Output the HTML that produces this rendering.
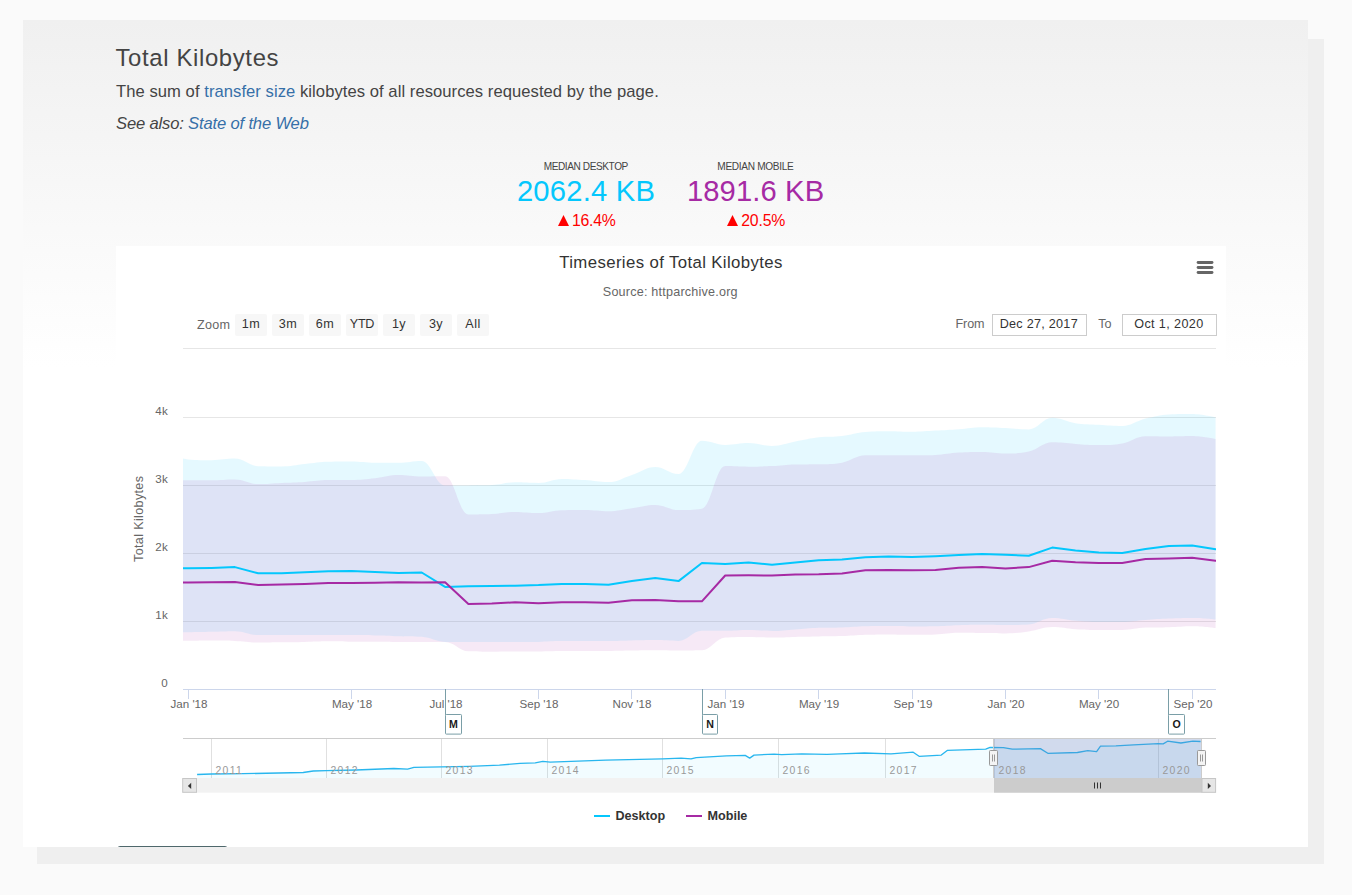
<!DOCTYPE html>
<html><head><meta charset="utf-8"><title>Total Kilobytes</title>
<style>
html,body{margin:0;padding:0}
body{width:1352px;height:895px;overflow:hidden;background:#fafafa;position:relative;font-family:"Liberation Sans",sans-serif;color:#444}
.shadow{position:absolute;left:37px;top:39px;width:1287px;height:825px;background:#efefef}
.card{position:absolute;left:23px;top:20px;width:1285px;height:827px;background:linear-gradient(#f0f0f0,#fff 42%);overflow:hidden}
.t{position:absolute;white-space:nowrap;line-height:1;margin:0;font-weight:normal}
a{color:#366fa8;text-decoration:none}
.c{text-align:center;transform:translateX(-50%)}
.btn{position:absolute;left:94px;top:826px;width:111px;height:30px;border:1px solid #4f686c;border-radius:3px;box-sizing:border-box}
</style></head><body>
<div class="shadow"></div>
<div class="card"><div class="btn"></div></div>
<h2 class="t" style="left:115.4px;top:46.2px;font-size:23.9px;letter-spacing:.65px">Total Kilobytes</h2>
<p class="t" style="left:116px;top:84px;font-size:16.6px;letter-spacing:.056px">The sum of <a>transfer size</a> kilobytes of all resources requested by the page.</p>
<p class="t" style="left:116px;top:116.2px;font-size:16.6px;font-style:italic;letter-spacing:-.17px">See also: <a>State of the Web</a></p>
<div class="t c" style="left:585.8px;top:162.3px;font-size:10.1px;letter-spacing:-.42px">MEDIAN DESKTOP</div>
<div class="t c" style="left:586px;top:176.6px;font-size:29.2px;letter-spacing:.2px;color:#04c7fd">2062.4 KB</div>
<div class="t c" style="left:586.6px;top:213.2px;font-size:15.8px;letter-spacing:-.2px;color:#f00"><svg width="11.2" height="11.1" viewBox="0 0 11.2 11.1" style="display:inline-block;vertical-align:baseline;margin-right:3.2px"><path d="M0 11.1L5.6 0L11.2 11.1Z" fill="#f00"/></svg>16.4%</div>
<div class="t c" style="left:755.4px;top:162.3px;font-size:10.1px;letter-spacing:-.32px">MEDIAN MOBILE</div>
<div class="t c" style="left:755.6px;top:176.6px;font-size:29.2px;letter-spacing:.11px;color:#a62aa4">1891.6 KB</div>
<div class="t c" style="left:756px;top:213.2px;font-size:15.8px;letter-spacing:-.2px;color:#f00"><svg width="11.2" height="11.1" viewBox="0 0 11.2 11.1" style="display:inline-block;vertical-align:baseline;margin-right:3.2px"><path d="M0 11.1L5.6 0L11.2 11.1Z" fill="#f00"/></svg>20.5%</div>
<svg width="1110" height="600" viewBox="0 0 1110 600" style="position:absolute;left:116px;top:246px;font-family:'Liberation Sans',sans-serif;overflow:hidden">
<defs><clipPath id="cp"><rect x="67" y="102" width="1033" height="342"/></clipPath><clipPath id="cn"><rect x="67" y="493" width="1033" height="39"/></clipPath></defs>
<rect width="1110" height="600" fill="#fff"/>
<text x="555" y="21.69999999999999" text-anchor="middle" font-size="16.8" letter-spacing="0.375" fill="#333">Timeseries of Total Kilobytes</text>
<text x="554.3" y="49.69999999999999" text-anchor="middle" font-size="12.6" letter-spacing="0.21" fill="#666">Source: httparchive.org</text>
<path d="M1082.1 16.5H1096" stroke="#666" stroke-width="2.9" stroke-linecap="round"/>
<path d="M1082.1 21.5H1096" stroke="#666" stroke-width="2.9" stroke-linecap="round"/>
<path d="M1082.1 26.5H1096" stroke="#666" stroke-width="2.9" stroke-linecap="round"/>
<text x="81" y="82.60000000000002" font-size="12.6" letter-spacing="0.26" fill="#666">Zoom</text>
<rect x="119" y="68" width="32" height="22" rx="2" fill="#f7f7f7"/>
<text x="135" y="82.30000000000001" text-anchor="middle" font-size="12.6" letter-spacing="0.45" fill="#333">1m</text>
<rect x="156" y="68" width="32" height="22" rx="2" fill="#f7f7f7"/>
<text x="172" y="82.30000000000001" text-anchor="middle" font-size="12.6" letter-spacing="0.45" fill="#333">3m</text>
<rect x="193" y="68" width="32" height="22" rx="2" fill="#f7f7f7"/>
<text x="209" y="82.30000000000001" text-anchor="middle" font-size="12.6" letter-spacing="0.45" fill="#333">6m</text>
<rect x="230" y="68" width="32" height="22" rx="2" fill="#f7f7f7"/>
<text x="246" y="82.30000000000001" text-anchor="middle" font-size="12.6" letter-spacing="-0.3" fill="#333">YTD</text>
<rect x="267" y="68" width="32" height="22" rx="2" fill="#f7f7f7"/>
<text x="283" y="82.30000000000001" text-anchor="middle" font-size="12.6" letter-spacing="0.45" fill="#333">1y</text>
<rect x="304" y="68" width="32" height="22" rx="2" fill="#f7f7f7"/>
<text x="320" y="82.30000000000001" text-anchor="middle" font-size="12.6" letter-spacing="0.45" fill="#333">3y</text>
<rect x="341" y="68" width="32" height="22" rx="2" fill="#f7f7f7"/>
<text x="357" y="82.30000000000001" text-anchor="middle" font-size="12.6" letter-spacing="0.45" fill="#333">All</text>
<text x="839.5" y="82.30000000000001" font-size="12.6" letter-spacing="-0.1" fill="#666">From</text>
<rect x="876.5" y="68.5" width="94" height="21" fill="#fff" stroke="#ccc"/>
<text x="922.8" y="82.30000000000001" text-anchor="middle" font-size="12.6" letter-spacing="0.28" fill="#333">Dec 27, 2017</text>
<text x="982.2" y="82.30000000000001" font-size="12.6" letter-spacing="0" fill="#666">To</text>
<rect x="1006.5" y="68.5" width="94" height="21" fill="#fff" stroke="#ccc"/>
<text x="1052.9" y="82.30000000000001" text-anchor="middle" font-size="12.6" letter-spacing="0.38" fill="#333">Oct 1, 2020</text>
<path d="M67 102.5H1100" stroke="#e6e6e6"/>
<text x="52" y="440.5" text-anchor="end" font-size="11.6" letter-spacing="0.3" fill="#666">0</text>
<path d="M67 375.5H1100" stroke="#e6e6e6"/>
<text x="52" y="372.5" text-anchor="end" font-size="11.6" letter-spacing="0.3" fill="#666">1k</text>
<path d="M67 307.5H1100" stroke="#e6e6e6"/>
<text x="52" y="304.5" text-anchor="end" font-size="11.6" letter-spacing="0.3" fill="#666">2k</text>
<path d="M67 239.5H1100" stroke="#e6e6e6"/>
<text x="52" y="236.5" text-anchor="end" font-size="11.6" letter-spacing="0.3" fill="#666">3k</text>
<path d="M67 171.5H1100" stroke="#e6e6e6"/>
<text x="52" y="168.5" text-anchor="end" font-size="11.6" letter-spacing="0.3" fill="#666">4k</text>
<text transform="translate(26.80000000000001 272.79999999999995) rotate(-90)" text-anchor="middle" font-size="12.6" letter-spacing="0.34" fill="#666">Total Kilobytes</text>
<g clip-path="url(#cp)">
<path d="M48.8 206.5C48.8 206.5 62.9 212.6 72.2 213.4C81.5 214.2 86.2 214.2 95.5 214.2C104.9 214.2 109.6 212.6 118.9 212.6C128.2 212.6 132.9 220 142.2 220.2C151.6 220.4 156.3 220.4 165.6 220.4C174.9 220.4 179.6 218.9 188.9 218C198.3 217.1 203 216 212.3 215.8C221.6 215.6 226.3 215.6 235.6 215.6C245 215.6 249.7 216.8 259 216.8C268.3 216.8 273 216.8 282.4 216.8C291.7 216.8 296.4 215 305.7 215C315 215 319.7 239.6 329.1 239.6C338.4 239.6 343.1 239.6 352.4 239.5C361.7 239.4 366.4 239.5 375.8 239.1C385.1 238.7 389.8 236.3 399.1 236.3C408.4 236.3 413.1 236.9 422.5 236.9C431.8 236.9 436.5 232.9 445.8 232.9C455.1 232.9 459.8 233.5 469.2 234.1C478.5 234.7 483.2 236.1 492.5 236.1C501.8 236.1 506.5 232 515.9 229C525.2 226 529.9 221 539.2 221C548.5 221 553.2 228 562.5 228C571.9 228 576.6 194.7 585.9 194.7C595.2 194.7 599.9 198.9 609.2 198.9C618.6 198.9 623.3 197.1 632.6 197.1C641.9 197.1 646.6 199.9 656 199.9C665.3 199.9 670 197.2 679.3 195.5C688.6 193.8 693.3 192.4 702.7 191.3C712 190.2 716.7 191 726 189.9C735.3 188.8 740 186.8 749.4 186C758.7 185.2 763.4 185.2 772.7 185.2C782 185.2 786.7 185.8 796 185.8C805.4 185.8 810.1 185.1 819.4 184.6C828.7 184.1 833.4 183.9 842.8 183.2C852.1 182.5 856.8 181.2 866.1 181.2C875.4 181.2 880.1 181.6 889.5 182C898.8 182.4 903.5 183.4 912.8 183.4C922.1 183.4 926.8 171.8 936.2 171.8C945.5 171.8 950.2 175.8 959.5 177.2C968.8 178.6 973.5 178.2 982.9 178.8C992.2 179.4 996.9 180 1006.2 180C1015.5 180 1020.2 174.9 1029.5 172.6C1038.9 170.3 1043.6 168.8 1052.9 168.4C1062.2 168 1066.9 168 1076.2 168C1085.6 168 1099.6 171.4 1099.6 171.4L1099.6 373.6C1099.6 373.6 1085.6 372 1076.2 372C1066.9 372 1062.2 372.2 1052.9 372.6C1043.6 373 1038.9 373.3 1029.5 374C1020.2 374.7 1015.5 376 1006.2 376C996.9 376 992.2 376 982.9 376C973.5 376 968.8 375.6 959.5 374.8C950.2 374 945.5 372 936.2 372C926.8 372 922.1 377.8 912.8 378.4C903.5 379 898.8 379 889.5 379C880.1 379 875.4 378.8 866.1 378.8C856.8 378.8 852.1 378.9 842.8 379.2C833.4 379.5 828.7 380 819.4 380.2C810.1 380.4 805.4 380.4 796 380.4C786.7 380.4 782 380 772.7 380C763.4 380 758.7 380 749.4 380.2C740 380.4 735.3 381.1 726 381.4C716.7 381.7 712 381.4 702.7 381.8C693.3 382.2 688.6 382.8 679.3 383.4C670 384 665.3 385 656 385C646.6 385 641.9 384 632.6 384C623.3 384 618.6 384.8 609.2 384.8C599.9 384.8 595.2 384.8 585.9 384.8C576.6 384.8 571.9 394.9 562.5 394.9C553.2 394.9 548.5 394.1 539.2 394.1C529.9 394.1 525.2 394.3 515.9 394.5C506.5 394.7 501.8 395.1 492.5 395.1C483.2 395.1 478.5 395.1 469.2 395.1C459.8 395.1 455.1 395.1 445.8 395.1C436.5 395.1 431.8 395.7 422.5 395.9C413.1 396.1 408.4 396.1 399.1 396.1C389.8 396.1 385.1 396.1 375.8 396.1C366.4 396.1 361.7 396.1 352.4 396.1C343.1 396.1 338.4 396.1 329.1 395.9C319.7 395.7 315 391.4 305.7 390.8C296.4 390.2 291.7 390.5 282.4 390.2C273 389.9 268.3 389.6 259 389.4C249.7 389.2 245 389 235.6 389C226.3 389 221.6 389 212.3 389C203 389 198.3 389 188.9 389C179.6 389 174.9 389 165.6 389C156.3 389 151.6 389 142.2 389C132.9 389 128.2 385.2 118.9 385.2C109.6 385.2 104.9 385.6 95.5 385.8C86.2 386 81.5 386.2 72.2 386.2C62.9 386.2 48.8 386.2 48.8 386.2Z" fill="#04c7fd" fill-opacity="0.1"/>
<path d="M48.8 233C48.8 233 62.9 234.3 72.2 234.3C81.5 234.3 86.2 234.3 95.5 234.3C104.9 234.3 109.6 233.5 118.9 233.5C128.2 233.5 132.9 238.1 142.2 238.1C151.6 238.1 156.3 237.3 165.6 236.9C174.9 236.5 179.6 236.5 188.9 235.9C198.3 235.3 203 234.2 212.3 234.1C221.6 234 226.3 234.1 235.6 234C245 233.9 249.7 233.3 259 232.3C268.3 231.3 273 229 282.4 229C291.7 229 296.4 230.5 305.7 230.5C315 230.5 319.7 230.3 329.1 230.3C338.4 230.3 343.1 268.5 352.4 268.5C361.7 268.5 366.4 268.5 375.8 268.1C385.1 267.7 389.8 265.9 399.1 265.9C408.4 265.9 413.1 267.1 422.5 267.1C431.8 267.1 436.5 264.5 445.8 264.3C455.1 264.1 459.8 264.1 469.2 264.1C478.5 264.1 483.2 265.3 492.5 265.3C501.8 265.3 506.5 263.5 515.9 262.3C525.2 261.1 529.9 259.1 539.2 259.1C548.5 259.1 553.2 264.1 562.5 264.1C571.9 264.1 576.6 264.1 585.9 262.8C595.2 261.5 599.9 220.1 609.2 220.1C618.6 220.1 623.3 220.7 632.6 220.7C641.9 220.7 646.6 220.5 656 220.1C665.3 219.7 670 218.7 679.3 218.5C688.6 218.3 693.3 218.5 702.7 218.3C712 218.1 716.7 218.3 726 216.7C735.3 215.1 740 209.3 749.4 209.3C758.7 209.3 763.4 209.3 772.7 209.3C782 209.3 786.7 209.3 796 209.3C805.4 209.3 810.1 209.3 819.4 208.9C828.7 208.5 833.4 207.1 842.8 206.5C852.1 205.9 856.8 205.9 866.1 205.9C875.4 205.9 880.1 207.5 889.5 207.5C898.8 207.5 903.5 207.5 912.8 205.5C922.1 203.5 926.8 196.3 936.2 196.3C945.5 196.3 950.2 197.3 959.5 197.9C968.8 198.5 973.5 199.1 982.9 199.1C992.2 199.1 996.9 199.1 1006.2 197.5C1015.5 195.9 1020.2 190.3 1029.5 190.3C1038.9 190.3 1043.6 190.5 1052.9 190.5C1062.2 190.5 1066.9 190.1 1076.2 190.1C1085.6 190.1 1099.6 193.1 1099.6 193.1L1099.6 382C1099.6 382 1085.6 380.2 1076.2 380.2C1066.9 380.2 1062.2 380.9 1052.9 381.2C1043.6 381.5 1038.9 381.2 1029.5 381.6C1020.2 382 1015.5 384 1006.2 384C996.9 384 992.2 384 982.9 384C973.5 384 968.8 383.8 959.5 383.2C950.2 382.6 945.5 381 936.2 381C926.8 381 922.1 384.1 912.8 385.4C903.5 386.7 898.8 387.4 889.5 387.4C880.1 387.4 875.4 387.1 866.1 387C856.8 386.9 852.1 386.8 842.8 386.8C833.4 386.8 828.7 388 819.4 388.4C810.1 388.8 805.4 388.8 796 388.8C786.7 388.8 782 388.4 772.7 388.4C763.4 388.4 758.7 388.5 749.4 388.8C740 389.1 735.3 389.8 726 390.1C716.7 390.4 712 390.3 702.7 390.5C693.3 390.7 688.6 390.7 679.3 390.9C670 391.1 665.3 391.5 656 391.5C646.6 391.5 641.9 390.9 632.6 390.9C623.3 390.9 618.6 390.9 609.2 391.5C599.9 392.1 595.2 404.1 585.9 404.3C576.6 404.5 571.9 404.5 562.5 404.5C553.2 404.5 548.5 404.3 539.2 404.3C529.9 404.3 525.2 404.4 515.9 404.5C506.5 404.6 501.8 404.9 492.5 404.9C483.2 404.9 478.5 404.9 469.2 404.9C459.8 404.9 455.1 405 445.8 405.1C436.5 405.2 431.8 405.5 422.5 405.5C413.1 405.5 408.4 405.5 399.1 405.5C389.8 405.5 385.1 405.7 375.8 405.7C366.4 405.7 361.7 405.7 352.4 405.3C343.1 404.9 338.4 395.9 329.1 395.9C319.7 395.9 315 396.1 305.7 396.1C296.4 396.1 291.7 396 282.4 395.9C273 395.8 268.3 395.7 259 395.7C249.7 395.7 245 395.7 235.6 395.7C226.3 395.7 221.6 395.3 212.3 395.3C203 395.3 198.3 395.7 188.9 395.9C179.6 396.1 174.9 396.2 165.6 396.3C156.3 396.4 151.6 396.5 142.2 396.5C132.9 396.5 128.2 395.3 118.9 394.9C109.6 394.5 104.9 394.5 95.5 394.5C86.2 394.5 81.5 394.7 72.2 394.7C62.9 394.7 48.8 394.7 48.8 394.7Z" fill="#a62aa4" fill-opacity="0.1"/>
<path d="M48.8 322L72.2 322.3L95.5 321.9L118.9 321.1L142.2 327.3L165.6 327.3L188.9 326.3L212.3 325.3L235.6 325.1L259 325.9L282.4 326.9L305.7 326.5L329.1 340.9L352.4 340.3L375.8 340.1L399.1 339.7L422.5 339.1L445.8 337.9L469.2 338.1L492.5 338.7L515.9 334.9L539.2 331.9L562.5 335.1L585.9 317L609.2 318L632.6 316.4L656 318.8L679.3 316.4L702.7 314.2L726 313.6L749.4 311.2L772.7 310.4L796 311L819.4 310.2L842.8 309L866.1 308L889.5 308.8L912.8 309.8L936.2 301.6L959.5 304.4L982.9 306.4L1006.2 307L1029.5 303L1052.9 300L1076.2 299.6L1099.6 303.2" fill="none" stroke="#04c7fd" stroke-width="2" stroke-linejoin="round" stroke-linecap="round"/>
<path d="M48.8 336.4L72.2 336.5L95.5 336.2L118.9 335.9L142.2 339.1L165.6 338.5L188.9 337.9L212.3 337.1L235.6 337.1L259 336.8L282.4 336.3L305.7 336.5L329.1 336.3L352.4 358.1L375.8 357.5L399.1 356.3L422.5 357.3L445.8 356.3L469.2 356.3L492.5 356.7L515.9 354.3L539.2 354.1L562.5 355.3L585.9 355.3L609.2 329.5L632.6 329.3L656 329.5L679.3 328.5L702.7 328.3L726 327.5L749.4 324.3L772.7 323.9L796 324.3L819.4 323.9L842.8 321.7L866.1 320.9L889.5 322.5L912.8 321.1L936.2 314.8L959.5 316.2L982.9 317L1006.2 317L1029.5 313L1052.9 312.6L1076.2 311.8L1099.6 314.8" fill="none" stroke="#a62aa4" stroke-width="2" stroke-linejoin="round" stroke-linecap="round"/>
</g>
<path d="M67 443.5H1100" stroke="#ccd6eb"/>
<path d="M72.5 443.5V453" stroke="#ccd6eb"/>
<text x="73" y="461.9" text-anchor="middle" font-size="11.6" letter-spacing="0" fill="#666">Jan '18</text>
<path d="M235.5 443.5V453" stroke="#ccd6eb"/>
<text x="236" y="461.9" text-anchor="middle" font-size="11.6" letter-spacing="0" fill="#666">May '18</text>
<path d="M329.5 443.5V453" stroke="#ccd6eb"/>
<text x="330" y="461.9" text-anchor="middle" font-size="11.6" letter-spacing="0" fill="#666">Jul '18</text>
<path d="M422.5 443.5V453" stroke="#ccd6eb"/>
<text x="423" y="461.9" text-anchor="middle" font-size="11.6" letter-spacing="0" fill="#666">Sep '18</text>
<path d="M515.5 443.5V453" stroke="#ccd6eb"/>
<text x="516" y="461.9" text-anchor="middle" font-size="11.6" letter-spacing="0" fill="#666">Nov '18</text>
<path d="M609.5 443.5V453" stroke="#ccd6eb"/>
<text x="610" y="461.9" text-anchor="middle" font-size="11.6" letter-spacing="0" fill="#666">Jan '19</text>
<path d="M702.5 443.5V453" stroke="#ccd6eb"/>
<text x="703" y="461.9" text-anchor="middle" font-size="11.6" letter-spacing="0" fill="#666">May '19</text>
<path d="M796.5 443.5V453" stroke="#ccd6eb"/>
<text x="797" y="461.9" text-anchor="middle" font-size="11.6" letter-spacing="0" fill="#666">Sep '19</text>
<path d="M889.5 443.5V453" stroke="#ccd6eb"/>
<text x="890" y="461.9" text-anchor="middle" font-size="11.6" letter-spacing="0" fill="#666">Jan '20</text>
<path d="M982.5 443.5V453" stroke="#ccd6eb"/>
<text x="983" y="461.9" text-anchor="middle" font-size="11.6" letter-spacing="0" fill="#666">May '20</text>
<path d="M1076.5 443.5V453" stroke="#ccd6eb"/>
<text x="1077" y="461.9" text-anchor="middle" font-size="11.6" letter-spacing="0" fill="#666">Sep '20</text>
<path d="M329.5 443V469" stroke="#7a9ea7"/>
<rect x="329.5" y="468.5" width="16" height="19.6" rx="0.8" fill="#fff" stroke="#7a9ea7"/>
<text x="337.5" y="481.70000000000005" text-anchor="middle" font-size="10.6" font-weight="bold" fill="#1a1a1a">M</text>
<path d="M586.5 443V469" stroke="#7a9ea7"/>
<rect x="586.5" y="468.5" width="15" height="19.6" rx="0.8" fill="#fff" stroke="#7a9ea7"/>
<text x="594" y="481.70000000000005" text-anchor="middle" font-size="10.6" font-weight="bold" fill="#1a1a1a">N</text>
<path d="M1052.5 443V469" stroke="#7a9ea7"/>
<rect x="1052.5" y="468.5" width="16" height="19.6" rx="0.8" fill="#fff" stroke="#7a9ea7"/>
<text x="1060.5" y="481.70000000000005" text-anchor="middle" font-size="10.6" font-weight="bold" fill="#1a1a1a">O</text>
<path d="M67 492.5H1100" stroke="#ccc"/>
<path d="M95.5 493V532" stroke="#e0e0e0"/>
<path d="M210.5 493V532" stroke="#e0e0e0"/>
<path d="M325.5 493V532" stroke="#e0e0e0"/>
<path d="M431.5 493V532" stroke="#e0e0e0"/>
<path d="M546.5 493V532" stroke="#e0e0e0"/>
<path d="M662.5 493V532" stroke="#e0e0e0"/>
<path d="M769.5 493V532" stroke="#e0e0e0"/>
<path d="M878.5 493V532" stroke="#e0e0e0"/>
<path d="M1042.5 493V532" stroke="#e0e0e0"/>
<g clip-path="url(#cn)"><path d="M81.1 528.5L95.4 528L126.9 527.7L187.2 526.5L197.3 525L210.4 524.7L240 524L277.8 522.5L291.6 523.2L297.9 521.4L325.6 520.9L353.2 520.4L383.4 519.2L404 517.4L419.2 516.9L426.8 515.4L434.3 516.2L489.6 514.2L546.5 512.9L565.1 512.1L575.1 512.9L580.2 511.6L610.4 509.9L629.2 509.4L633.7 512.1L638 509.1L658.1 508.1L665.7 508.6L685.8 507.9L711 508.4L724 507.9L748.4 507L775 507.9L797.2 506.2L803.1 510.3L825.3 509.1L831.2 504.4L869.7 503.2L874.1 501.4L887.4 501.7L896.3 503.2L924.4 502.6L931.8 507.3L961.4 506.5L971.8 504.7L980.6 505.6L984.5 500.2L999.9 499.9L1017.6 498.8L1042.2 497.6L1047.2 497.9L1051.6 495.2L1064.9 497L1076.8 495.2L1084.6 495.5L1084.6 532L81.1 532Z" fill="#04c7fd" fill-opacity="0.05"/>
<path d="M81.1 528.5L95.4 528L126.9 527.7L187.2 526.5L197.3 525L210.4 524.7L240 524L277.8 522.5L291.6 523.2L297.9 521.4L325.6 520.9L353.2 520.4L383.4 519.2L404 517.4L419.2 516.9L426.8 515.4L434.3 516.2L489.6 514.2L546.5 512.9L565.1 512.1L575.1 512.9L580.2 511.6L610.4 509.9L629.2 509.4L633.7 512.1L638 509.1L658.1 508.1L665.7 508.6L685.8 507.9L711 508.4L724 507.9L748.4 507L775 507.9L797.2 506.2L803.1 510.3L825.3 509.1L831.2 504.4L869.7 503.2L874.1 501.4L887.4 501.7L896.3 503.2L924.4 502.6L931.8 507.3L961.4 506.5L971.8 504.7L980.6 505.6L984.5 500.2L999.9 499.9L1017.6 498.8L1042.2 497.6L1047.2 497.9L1051.6 495.2L1064.9 497L1076.8 495.2L1084.6 495.5" fill="none" stroke="#28b6ee" stroke-width="1.3" stroke-linejoin="round"/></g>
<rect x="878" y="493" width="207" height="39" fill="#6685c2" fill-opacity="0.3"/>
<text x="99.5" y="527.8" font-size="10.4" letter-spacing="1.3" fill="#999">2011</text>
<text x="214.5" y="527.8" font-size="10.4" letter-spacing="1.3" fill="#999">2012</text>
<text x="329.5" y="527.8" font-size="10.4" letter-spacing="1.3" fill="#999">2013</text>
<text x="435.5" y="527.8" font-size="10.4" letter-spacing="1.3" fill="#999">2014</text>
<text x="550.5" y="527.8" font-size="10.4" letter-spacing="1.3" fill="#999">2015</text>
<text x="666.5" y="527.8" font-size="10.4" letter-spacing="1.3" fill="#999">2016</text>
<text x="773.5" y="527.8" font-size="10.4" letter-spacing="1.3" fill="#999">2017</text>
<text x="882.5" y="527.8" font-size="10.4" letter-spacing="1.3" fill="#999">2018</text>
<text x="1046.5" y="527.8" font-size="10.4" letter-spacing="1.3" fill="#999">2020</text>
<path d="M877.5 493V532M1085.5 493V532" stroke="#ccc"/>
<rect x="873.5" y="504.5" width="8" height="15" rx="0.8" fill="#f4f4f4" stroke="#999"/>
<path d="M876.5 508.5V515.5M878.5 508.5V515.5" stroke="#999"/>
<rect x="1081.5" y="504.5" width="8" height="15" rx="0.8" fill="#f4f4f4" stroke="#999"/>
<path d="M1084.5 508.5V515.5M1086.5 508.5V515.5" stroke="#999"/>
<rect x="67" y="532" width="1033" height="14.7" fill="#f2f2f2"/>
<rect x="878" y="532" width="208" height="14.7" fill="#ccc"/>
<path d="M978.5 536.5V542.5M981.5 536.5V542.5M984.5 536.5V542.5" stroke="#333"/>
<rect x="66.69999999999999" y="532.5" width="13.8" height="13.8" fill="#e6e6e6" stroke="#c6c6c6"/>
<path d="M75.19999999999999 536.8V543.1L71.9 539.95Z" fill="#333"/>
<rect x="1086" y="532.5" width="13.6" height="13.8" fill="#e6e6e6" stroke="#c6c6c6"/>
<path d="M1091.8 536.7V543.1L1095 539.9Z" fill="#333"/>
<path d="M478 570H494" stroke="#04c7fd" stroke-width="2"/>
<text x="499.4" y="573.9" font-size="12.6" font-weight="bold" letter-spacing="0" fill="#333">Desktop</text>
<path d="M570 570H586" stroke="#a62aa4" stroke-width="2"/>
<text x="591.5" y="573.9" font-size="12.6" font-weight="bold" letter-spacing="0" fill="#333">Mobile</text>
</svg>
</body></html>
